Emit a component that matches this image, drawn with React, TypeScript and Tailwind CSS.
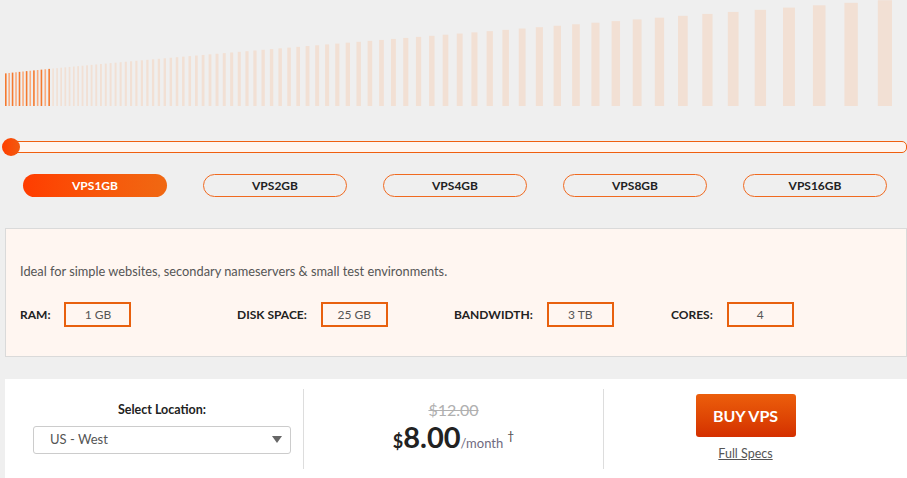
import React from "react";

const plans = ["VPS1GB", "VPS2GB", "VPS4GB", "VPS8GB", "VPS16GB"];

const specs = [
  { label: "RAM:", value: "1 GB" },
  { label: "DISK SPACE:", value: "25 GB" },
  { label: "BANDWIDTH:", value: "3 TB" },
  { label: "CORES:", value: "4" },
];

// bars get wider and further apart towards the right
function makeBars() {
  const bars: { x: number; w: number; top: number; on: boolean; i: number }[] = [];
  let x = 5;
  let i = 0;
  while (x < 890) {
    const p = 3.3 + 0.012 * x + 0.000028 * x * x;
    const w = Math.max(1.6, p * 0.4);
    const top = 74 * (1 - Math.pow(Math.min(x, 881) / 881, 0.92));
    bars.push({ x, w, top, on: x < 50, i });
    x += p;
    i++;
  }
  return bars;
}

function Bars() {
  const bars = makeBars();
  return (
    <svg width="907" height="107" viewBox="0 0 907 107" className="block">
      {bars.map((b) => (
        <rect
          key={b.i}
          x={b.x}
          y={b.top}
          width={b.w}
          height={106 - b.top}
          fill={b.on ? (b.i % 2 ? "#fbab7c" : "#f47a30") : "#f2e0d4"}
        />
      ))}
    </svg>
  );
}

export default function App() {
  return (
    <div className="w-[907px] h-[478px] overflow-hidden bg-[#efefef] font-['Lato',sans-serif] text-[#222]">
      <Bars />

      <div className="relative mt-[34px] ml-[3px] h-[12px]">
        <div className="h-[12px] rounded-[5px] border border-[#ef5f0f] bg-[#fff5ef]" />
        <div className="absolute left-[-1px] top-[-3px] w-[18px] h-[18px] rounded-full bg-gradient-to-r from-[#ff3d00] to-[#f15a10]" />
      </div>

      <div className="mt-[21px] ml-[5px] flex">
        {plans.map((p, i) => (
          <div key={p} className="w-[180px] flex justify-center">
            <button
              className={
                i === 0
                  ? "w-[144px] h-[23px] rounded-full bg-gradient-to-r from-[#ff3c00] to-[#f06812] text-white text-[12px] font-bold"
                  : "w-[144px] h-[23px] rounded-full border border-[#f06a20] text-[#222] text-[12px] font-bold"
              }
            >
              {p}
            </button>
          </div>
        ))}
      </div>

      <div className="mt-[31px] ml-[5px] h-[129px] border border-[#dadada] bg-[#fff6f1] px-[14px] pt-[33px]">
        <p className="text-[12.8px] text-[#555]">
          Ideal for simple websites, secondary nameservers &amp; small test environments.
        </p>
        <div className="mt-[21px] flex">
          {specs.map((s) => (
            <div key={s.label} className="w-[217px] flex items-center">
              <span className="text-[12px] font-bold text-[#222]">{s.label}</span>
              <span className="ml-[14px] w-[67px] h-[25px] border-2 border-[#e8600e] flex items-center justify-center text-[12px] text-[#555]">
                {s.value}
              </span>
            </div>
          ))}
        </div>
      </div>

      <div className="mt-[22px] ml-[5px] h-[120px] bg-white flex pt-[10px]">
        <div className="w-[299px] h-[80px] border-r border-[#ddd] flex flex-col items-center pt-[12px] pl-[16px]">
          <span className="text-[12.5px] font-bold text-[#222]">Select Location:</span>
          <div className="mt-[6px] w-[258px] h-[28px] border border-[#ccc] rounded-[3px] flex items-center justify-between pl-[16px] pr-[8px]">
            <span className="text-[13px] text-[#555]">US - West</span>
            <svg width="10" height="7" viewBox="0 0 10 7">
              <path d="M0 0h10L5 7z" fill="#666" />
            </svg>
          </div>
        </div>
        <div className="w-[300px] h-[80px] border-r border-[#ddd] flex flex-col items-center pt-[9px]">
          <span className="text-[16px] text-[#b0b0b0] line-through">$12.00</span>
          <div className="mt-[-2px] flex items-baseline">
            <span className="text-[18px] font-bold text-[#222]">$</span>
            <span className="text-[29px] font-bold text-[#222] leading-[34px]">8.00</span>
            <span className="text-[13px] text-[#6f6a80]">/month</span>
            <span className="ml-[4px] text-[12px] text-[#444] relative top-[-8px]">†</span>
          </div>
        </div>
        <div className="flex-1 h-[80px] flex flex-col items-center pt-[5px] pr-[20px]">
          <button className="w-[100px] h-[43px] rounded-[3px] bg-gradient-to-b from-[#ec5e0c] to-[#d42f00] text-white text-[16px] font-bold">
            BUY VPS
          </button>
          <a className="mt-[8px] text-[12.5px] text-[#555] underline">Full Specs</a>
        </div>
      </div>
    </div>
  );
}
